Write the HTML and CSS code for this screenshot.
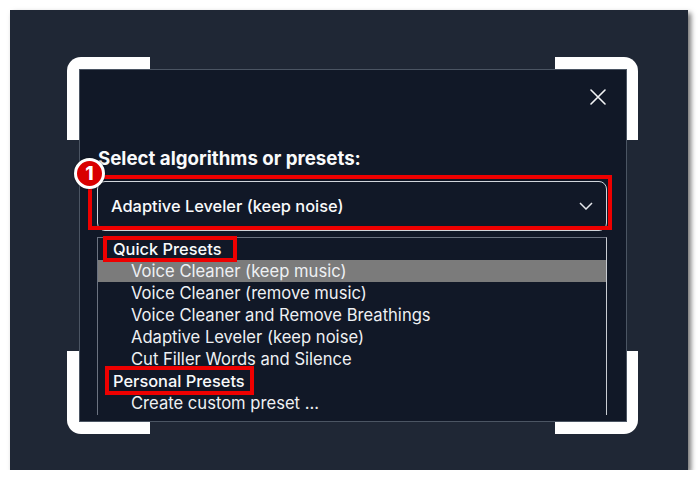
FILE: index.html
```html
<!DOCTYPE html>
<html lang="en">
<head>
<meta charset="utf-8">
<title>Select algorithms or presets</title>
<link rel="stylesheet" href="styles.css">
</head>
<body>
<div class="frame">
  <div class="bracket tl"></div>
  <div class="bracket tr"></div>
  <div class="bracket bl"></div>
  <div class="bracket br"></div>
  <div class="modal">
    <div class="modal-head">
      <button class="close" aria-label="Close">
        <svg width="16" height="16" viewBox="0 0 16 16"><path d="M1 1 L15 15 M15 1 L1 15" stroke="#f3f4f6" stroke-width="1.6" fill="none" stroke-linecap="round"/></svg>
      </button>
    </div>
    <h2 class="title">Select algorithms or presets:</h2>
    <div class="select">
      <span class="select-value">Adaptive Leveler (keep noise)</span>
      <svg class="chevron" width="14" height="8" viewBox="0 0 14 8"><polyline points="1,1 7,7 13,1" stroke="#e5e7eb" stroke-width="1.5" fill="none"/></svg>
    </div>
    <ul class="list">
      <li class="group"><span class="group-label mark-quick">Quick Presets</span></li>
      <li class="item active">Voice Cleaner (keep music)</li>
      <li class="item">Voice Cleaner (remove music)</li>
      <li class="item">Voice Cleaner and Remove Breathings</li>
      <li class="item">Adaptive Leveler (keep noise)</li>
      <li class="item">Cut Filler Words and Silence</li>
      <li class="group"><span class="group-label mark-personal">Personal Presets</span></li>
      <li class="item">Create custom preset ...</li>
    </ul>
    <div class="callout"></div>
    <div class="badge">1</div>
  </div>
</div>
</body>
</html>
```
FILE: styles.css
```css
*, *::before, *::after { box-sizing: border-box; }
html, body { margin: 0; padding: 0; background: #ffffff; }
body { font-family: Inter, "Noto Sans", sans-serif; color: #f3f4f6; }

.frame {
  position: relative;
  margin: 10px 0 0 10px;
  width: 678px;
  height: 460px;
  background: #1f2735;
  padding: 59px 0 0 69px;
  box-shadow: 3px 3px 5px rgba(0,0,0,0.55);
}

.bracket {
  position: absolute;
  width: 83px;
  height: 83px;
  border: 12px solid #ffffff;
}
.bracket.tl { left: 57px; top: 47px; border-right: 0; border-bottom: 0; border-top-left-radius: 14px; }
.bracket.tr { right: 50px; top: 47px; border-left: 0; border-bottom: 0; border-top-right-radius: 14px; }
.bracket.bl { left: 57px; bottom: 36px; border-right: 0; border-top: 0; border-bottom-left-radius: 14px; }
.bracket.br { right: 50px; bottom: 36px; border-left: 0; border-top: 0; border-bottom-right-radius: 14px; }

.modal {
  position: relative;
  z-index: 1;
  width: 548px;
  height: 353px;
  background: #111827;
  border: 1px solid #4b5563;
  padding: 19px 19px 0 17px;
}

.modal-head { display: flex; justify-content: flex-end; height: 16px; }
.close {
  background: none;
  border: 0;
  padding: 0;
  margin-right: 1px;
  width: 16px;
  height: 16px;
  display: block;
}
.close svg { display: block; }

.title {
  margin: 44px 0 0 1px;
  font-size: 18.7px;
  line-height: 20px;
  font-weight: 700;
  color: #f9fafb;
}

.select {
  margin-top: 12px;
  width: 510px;
  height: 50px;
  border: 1.5px solid #d1d5db;
  border-radius: 8px;
  display: flex;
  align-items: center;
  justify-content: space-between;
  padding: 0 13px 0 13px;
}
.select-value { font-size: 16.4px; font-weight: 500; color: #f9fafb; }
.chevron { display: block; }

.list {
  list-style: none;
  margin: 6px 0 0 0;
  padding: 0;
  width: 510px;
  height: 178px;
  border-top: 1px solid #6b7280;
  border-left: 1px solid #6b7280;
  border-right: 1px solid #c9cdd3;
  background: #111827;
  font-size: 16.6px;
  line-height: 22px;
}
.list li { height: 22px; white-space: nowrap; }
.group { padding-left: 15px; font-weight: 500; color: #f9fafb; font-size: 16.4px; }
.item { padding-left: 33px; color: #eef0f3; }
.item.active { background: #7b7b7b; }

.group-label { position: relative; display: inline-block; }
.group-label::after {
  content: "";
  position: absolute;
  border: 4px solid #ee0000;
}
.mark-quick::after { left: -10px; top: -2px; width: 134px; height: 26px; }
.mark-personal::after { left: -8px; top: -4px; width: 149px; height: 29px; }

.callout {
  position: absolute;
  left: 8px;
  top: 105px;
  width: 524px;
  height: 55px;
  border: 4px solid #ee0000;
}

.badge {
  position: absolute;
  left: -6px;
  top: 88px;
  width: 31px;
  height: 31px;
  border-radius: 50%;
  background: #d90000;
  border: 3px solid #ffffff;
  color: #ffffff;
  font-weight: 800;
  font-size: 19px;
  display: flex;
  align-items: center;
  justify-content: center;
  box-shadow: 0 0 2px rgba(0,0,0,0.6);
}
```
